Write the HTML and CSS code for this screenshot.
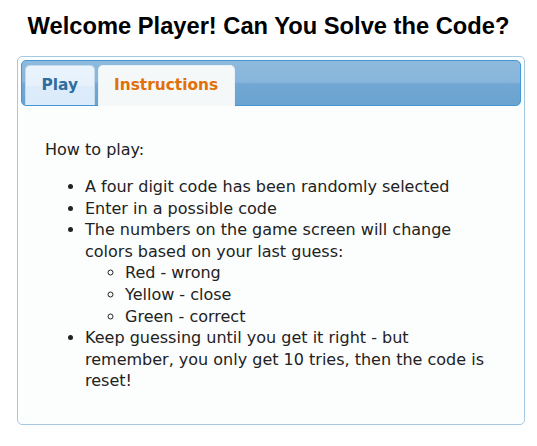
FILE: index.html
```html
<!DOCTYPE html>
<html lang="en">
<head>
<meta charset="utf-8">
<title>Code Game</title>
<link rel="stylesheet" href="styles.css">
</head>
<body>
<h1 class="title">Welcome Player! Can You Solve the Code?</h1>
<div class="tabs">
  <ul class="tabs-nav">
    <li class="tab"><a href="#play">Play</a></li>
    <li class="tab tab-active"><a href="#instructions">Instructions</a></li>
  </ul>
  <div class="panel" id="instructions">
    <p class="intro">How to play:</p>
    <ul class="rules">
      <li>A four digit code has been randomly selected</li>
      <li>Enter in a possible code</li>
      <li>The numbers on the game screen will change colors based on your last guess:
        <ul class="sub">
          <li>Red - wrong</li>
          <li>Yellow - close</li>
          <li>Green - correct</li>
        </ul>
      </li>
      <li>Keep guessing until you get it right - but remember, you only get 10 tries, then the code is reset!</li>
    </ul>
  </div>
</div>
</body>
</html>
```
FILE: styles.css
```css
body {
  margin: 8px;
  background: #ffffff;
  font-family: "DejaVu Sans", sans-serif;
}
.title {
  font-family: "Liberation Sans", Arial, sans-serif;
  font-size: 23.7px;
  font-weight: bold;
  text-align: center;
  color: #000;
  margin: 5px 0 16px;
  line-height: 27px;
}
.tabs {
  margin: 0 4px 0 9px;
  padding: 3px;
  border: 1px solid #a6c9e2;
  border-radius: 5px;
  background: #fcfdfd;
  font-size: 16px;
  color: #222222;
}
.tabs-nav {
  display: flex;
  margin: 0;
  padding: 3px 3px 0;
  list-style: none;
  border: 1px solid #4297d7;
  border-radius: 5px;
  background: linear-gradient(to bottom, #8fbade 0%, #87b5db 48%, #72a8d3 52%, #6aa3d0 100%);
}
.tab {
  position: relative;
  top: 1px;
  margin: 0 3px 1px 0;
  border: 1px solid #c5dbec;
  border-bottom: 0;
  border-radius: 5px 5px 0 0;
  background: linear-gradient(to bottom, #ebf4fd 0%, #e6f1fc 50%, #dcecfb 51%, #dbebfa 100%);
}
.tab a {
  display: block;
  padding: 9px 15.5px 8px;
  font-size: 15.4px;
  line-height: 21.5px;
  font-weight: bold;
  color: #2e6e9e;
  text-decoration: none;
}
.tab-active {
  margin-bottom: 0;
  padding-bottom: 1px;
  border-color: #e8f1f8;
  background: #f5f8f9;
}
.tab-active a {
  color: #e17009;
}
.panel {
  padding: 17px 22px 13px 24px;
  line-height: 21.6px;
}
.intro {
  margin: 16px 0;
}
.rules {
  margin: 16px 0;
  padding-left: 40px;
  list-style: disc;
}
.sub {
  margin: 0;
  padding-left: 40px;
  list-style: circle;
}
```
